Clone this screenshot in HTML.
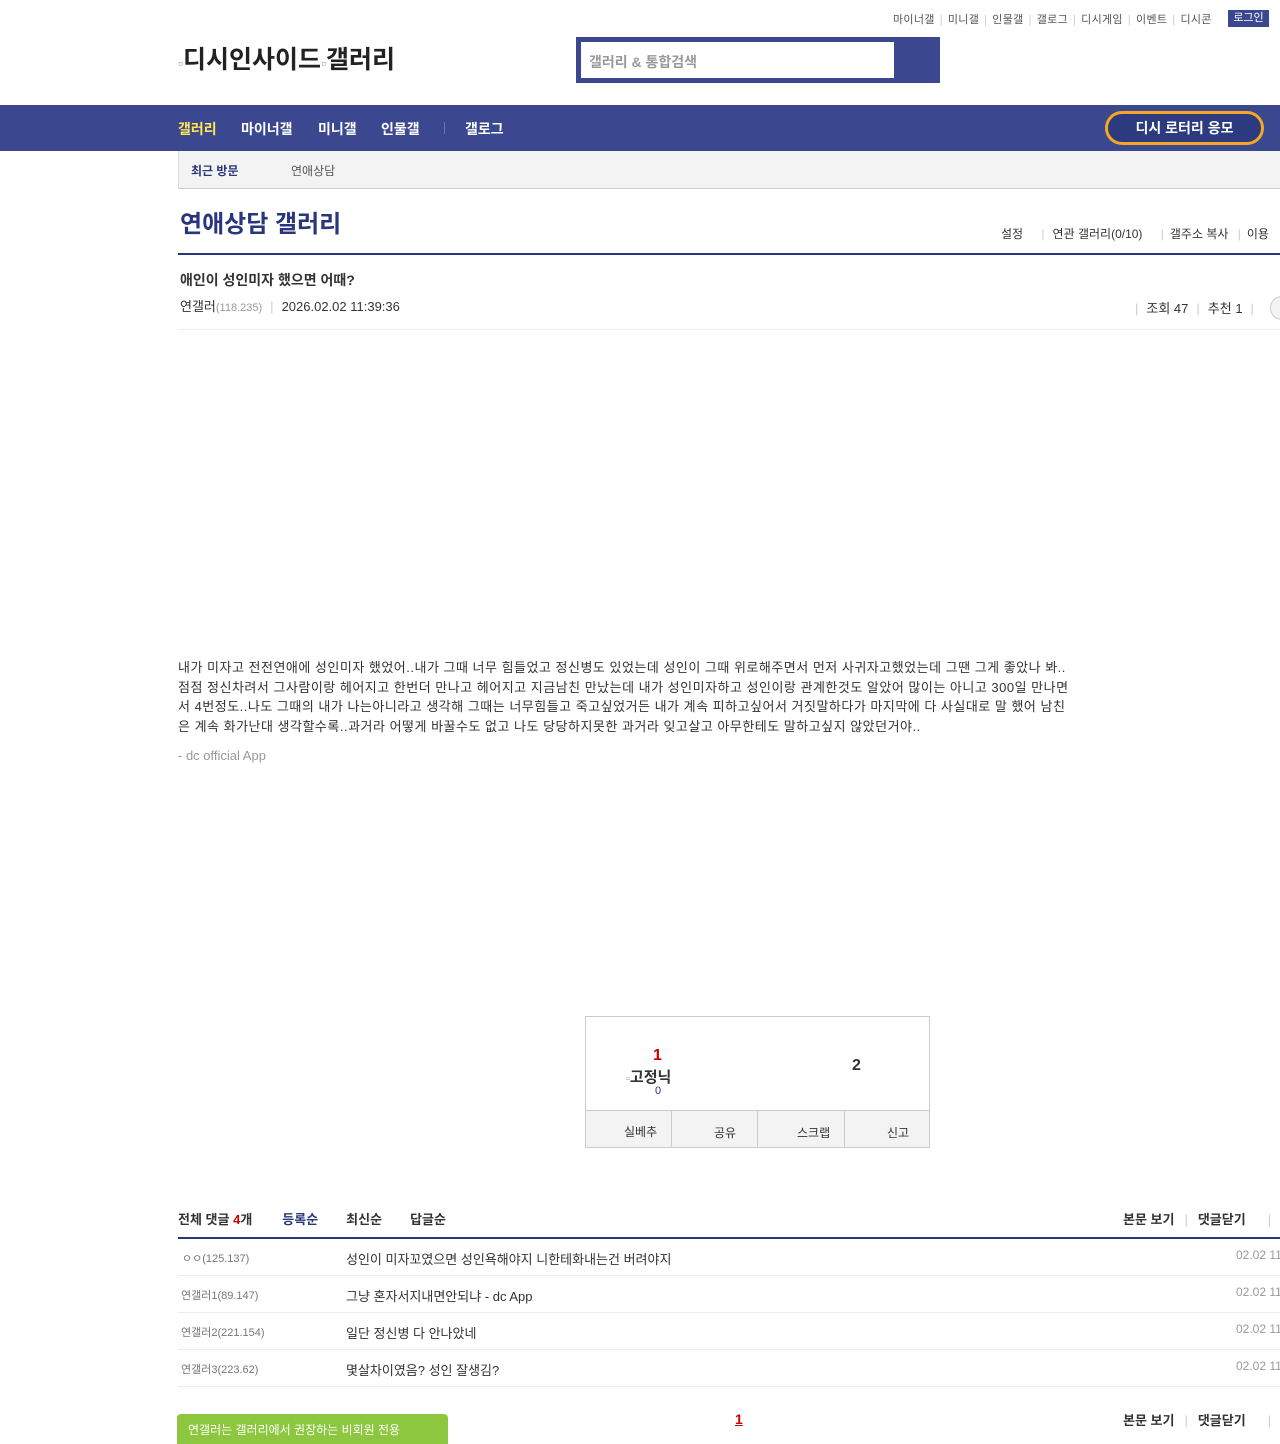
<!DOCTYPE html>
<html><head><meta charset="utf-8">
<style>
*{margin:0;padding:0;box-sizing:border-box}
body{width:1280px;height:1440px;overflow:hidden;background:#fff;font-family:"Liberation Sans","Noto Sans CJK KR",sans-serif;color:#333;position:relative}
.a{position:absolute;white-space:nowrap}
.top{font-size:11px;color:#555;top:11px;left:893px;letter-spacing:0.3px}
.top span.s{color:#ccc;margin:0 5px}
.login{top:10px;left:1228px;width:41px;height:17px;background:#3b4890;color:#fff;font-size:11px;text-align:center;line-height:17px}
.logo{top:40px;left:178px;font-size:25px;font-weight:bold;color:#222}
.search{top:37px;left:576px;width:364px;height:46px;background:#3b4890}
.search div{position:absolute;left:5px;top:5px;width:313px;height:36px;background:#fff;font-size:14px;color:#999;padding:10px 8px;font-weight:bold}
.nav{top:105px;left:0;width:1280px;height:46px;background:#3b4890}
.nav span{position:absolute;top:14px;font-size:14px;font-weight:bold;color:#fff}
.lot{top:111px;left:1105px;width:159px;height:34px;border:3px solid #f5a623;border-radius:17px;background:#2d3a80;color:#fff;font-size:14px;font-weight:bold;text-align:center;line-height:28px}
.sub{top:151px;left:178px;width:1102px;height:38px;background:#f3f3f3;border-left:1px solid #ddd;border-bottom:1px solid #ccc}
.title{top:204px;left:180px;font-size:24px;font-weight:bold;color:#29367c}
.hline{top:253px;left:178px;width:1102px;height:2px;background:#29367c}
.gray{color:#999}
</style></head><body>
<div class="a top">마이너갤<span class="s">|</span>미니갤<span class="s">|</span>인물갤<span class="s">|</span>갤로그<span class="s">|</span>디시게임<span class="s">|</span>이벤트<span class="s">|</span>디시콘</div>
<div class="a login">로그인</div>
<div class="a logo"><span style="font-size:14px;color:#999">▫</span>디시인사이드<span style="font-size:14px;color:#999">▫</span>갤러리</div>
<div class="a search"><div>갤러리 &amp; 통합검색</div></div>
<div class="a nav">
<span style="left:178px;color:#ffe74e">갤러리</span>
<span style="left:241px">마이너갤</span>
<span style="left:318px">미니갤</span>
<span style="left:381px">인물갤</span>
<span style="left:444px;top:17px;width:1px;height:12px;background:#6a74aa"></span>
<span style="left:465px">갤로그</span>
</div>
<div class="a lot">디시 로터리 응모</div>
<div class="a sub"><span class="a" style="left:12px;top:11px;font-size:12px;font-weight:bold;color:#29367c">최근 방문</span><span class="a" style="left:112px;top:11px;font-size:12px;color:#555">연애상담</span></div>
<div class="a title">연애상담 갤러리</div>
<div class="a" style="top:225px;left:1001px;font-size:12px;color:#333">설정 <span style="color:#ccc;margin:0 8px 0 15px">|</span>연관 갤러리(0/10) <span style="color:#ccc;margin:0 6px 0 15px">|</span>갤주소 복사 <span style="color:#ccc;margin:0 6px">|</span>이용</div>
<div class="a hline"></div>
<div class="a" style="top:270px;left:180px;font-size:14px;font-weight:bold;color:#333">애인이 성인미자 했으면 어때?</div>
<div class="a" style="top:296px;left:180px;font-size:13px">연갤러<span class="gray" style="font-size:11px">(118.235)</span><span style="color:#ccc;margin:0 8px">|</span>2026.02.02 11:39:36</div>
<div class="a" style="top:298px;left:1135px;font-size:13px"><span style="color:#ccc;margin-right:8px">|</span>조회 47<span style="color:#ccc;margin:0 8px">|</span>추천 1<span style="color:#ccc;margin:0 8px">|</span></div>
<div class="a" style="top:296px;left:1270px;width:24px;height:24px;border:1px solid #ccc;border-radius:12px;background:#f3f3f3"></div>
<div class="a" style="top:329px;left:178px;width:1102px;height:1px;background:#eee"></div>
<div class="a" style="top:658px;left:178px;width:895px;white-space:normal;font-size:13px;line-height:19.5px;color:#333;letter-spacing:0.5px">내가 미자고 전전연애에 성인미자 했었어..내가 그때 너무 힘들었고 정신병도 있었는데 성인이 그때 위로해주면서 먼저 사귀자고했었는데 그땐 그게 좋았나 봐..점점 정신차려서 그사람이랑 헤어지고 한번더 만나고 헤어지고 지금남친 만났는데 내가 성인미자하고 성인이랑 관계한것도 알았어 많이는 아니고 300일 만나면서 4번정도..나도 그때의 내가 나는아니라고 생각해 그때는 너무힘들고 죽고싶었거든 내가 계속 피하고싶어서 거짓말하다가 마지막에 다 사실대로 말 했어 남친은 계속 화가난대 생각할수록..과거라 어떻게 바꿀수도 없고 나도 당당하지못한 과거라 잊고살고 아무한테도 말하고싶지 않았던거야..</div>
<div class="a" style="top:748px;left:178px;font-size:13px;color:#999">- dc official App</div>
<div class="a" style="top:1016px;left:585px;width:345px;height:132px;border:1px solid #ccc">
<span class="a" style="left:67px;top:30px;font-size:16px;font-weight:bold;color:#c00">1</span>
<span class="a" style="left:40px;top:49px;font-size:15px;font-weight:bold;color:#333"><span style="font-size:11px;color:#999">▫</span>고정닉</span>
<span class="a" style="left:69px;top:68px;font-size:11px;color:#29367c">0</span>
<span class="a" style="left:266px;top:40px;font-size:16px;font-weight:bold;color:#333">2</span>
<div class="a" style="left:0;top:93px;width:343px;height:37px;background:#f3f3f3;border-top:1px solid #ccc;font-size:12px">
<span class="a" style="left:38px;top:12px">실베추</span><span class="a" style="left:85px;top:0;width:1px;height:37px;background:#ccc"></span>
<span class="a" style="left:128px;top:13px">공유</span><span class="a" style="left:171px;top:0;width:1px;height:37px;background:#ccc"></span>
<span class="a" style="left:211px;top:13px">스크랩</span><span class="a" style="left:258px;top:0;width:1px;height:37px;background:#ccc"></span>
<span class="a" style="left:301px;top:13px">신고</span></div>
</div>
<div class="a" style="top:1209px;left:178px;font-size:13px;font-weight:bold;color:#333">전체 댓글 <span style="color:#c00">4</span>개<span style="color:#29367c;margin-left:30px">등록순</span><span style="margin-left:28px">최신순</span><span style="margin-left:28px">답글순</span></div>
<div class="a" style="top:1209px;left:1123px;font-size:13px;font-weight:bold">본문 보기<span style="color:#ccc;font-weight:normal;margin:0 10px">|</span>댓글닫기<span style="color:#ccc;font-weight:normal;margin-left:22px">|</span></div>
<div class="a" style="top:1237px;left:178px;width:1102px;height:2px;background:#29367c"></div>
<div class="a" style="top:1250px;left:182px;font-size:11px;color:#777">ㅇㅇ(125.137)</div><div class="a" style="top:1249px;left:346px;font-size:13px">성인이 미자꼬였으면 성인욕해야지 니한테화내는건 버려야지</div><div class="a" style="top:1248px;left:1236px;font-size:12px;color:#999">02.02 11</div>
<div class="a" style="top:1275px;left:178px;width:1102px;height:1px;background:#eee"></div>
<div class="a" style="top:1287px;left:181px;font-size:11px;color:#777">연갤러1(89.147)</div><div class="a" style="top:1286px;left:346px;font-size:13px">그냥 혼자서지내면안되냐 - dc App</div><div class="a" style="top:1285px;left:1236px;font-size:12px;color:#999">02.02 11</div>
<div class="a" style="top:1312px;left:178px;width:1102px;height:1px;background:#eee"></div>
<div class="a" style="top:1324px;left:181px;font-size:11px;color:#777">연갤러2(221.154)</div><div class="a" style="top:1323px;left:346px;font-size:13px">일단 정신병 다 안나았네</div><div class="a" style="top:1322px;left:1236px;font-size:12px;color:#999">02.02 11</div>
<div class="a" style="top:1349px;left:178px;width:1102px;height:1px;background:#eee"></div>
<div class="a" style="top:1361px;left:181px;font-size:11px;color:#777">연갤러3(223.62)</div><div class="a" style="top:1360px;left:346px;font-size:13px">몇살차이였음? 성인 잘생김?</div><div class="a" style="top:1359px;left:1236px;font-size:12px;color:#999">02.02 11</div>
<div class="a" style="top:1386px;left:178px;width:1102px;height:1px;background:#eee"></div>
<div class="a" style="top:1414px;left:177px;width:271px;height:30px;background:#8dc63f;border-radius:4px 4px 0 0;color:#fff;font-size:12px;padding:7px 11px">연갤러는 갤러리에서 권장하는 비회원 전용</div>
<div class="a" style="top:1411px;left:735px;font-size:14px;font-weight:bold;color:#c00;text-decoration:underline">1</div>
<div class="a" style="top:1410px;left:1123px;font-size:13px;font-weight:bold">본문 보기<span style="color:#ccc;font-weight:normal;margin:0 10px">|</span>댓글닫기<span style="color:#ccc;font-weight:normal;margin-left:22px">|</span></div>
</body></html>
